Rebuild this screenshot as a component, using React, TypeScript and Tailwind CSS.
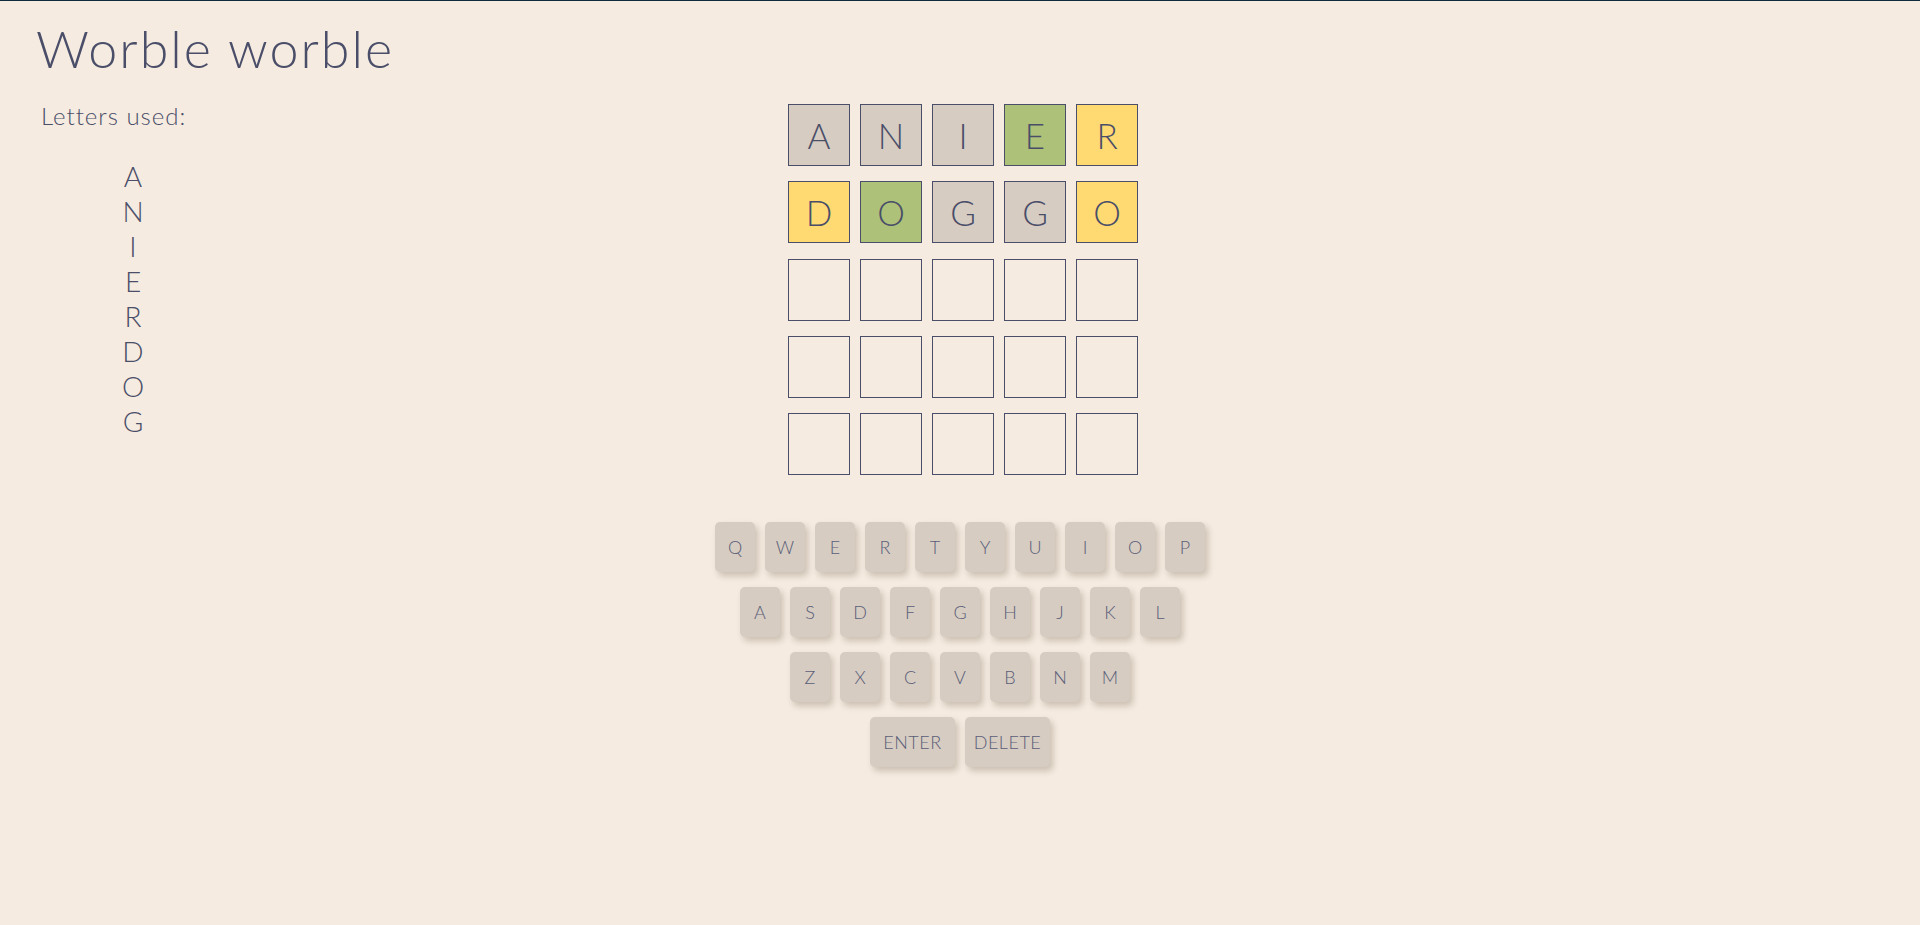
import React from "react";

const rows: { letter: string; state: "gray" | "green" | "yellow" | "empty" }[][] = [
  [
    { letter: "A", state: "gray" },
    { letter: "N", state: "gray" },
    { letter: "I", state: "gray" },
    { letter: "E", state: "green" },
    { letter: "R", state: "yellow" },
  ],
  [
    { letter: "D", state: "yellow" },
    { letter: "O", state: "green" },
    { letter: "G", state: "gray" },
    { letter: "G", state: "gray" },
    { letter: "O", state: "yellow" },
  ],
  ...Array.from({ length: 3 }, () =>
    Array.from({ length: 5 }, () => ({ letter: "", state: "empty" as const }))
  ),
];

const bgFor = {
  gray: "bg-[#d6ccc2]",
  green: "bg-[#adc178]",
  yellow: "bg-[#ffd972]",
  empty: "bg-transparent",
};

const keyRows = [
  ["Q", "W", "E", "R", "T", "Y", "U", "I", "O", "P"],
  ["A", "S", "D", "F", "G", "H", "J", "K", "L"],
  ["Z", "X", "C", "V", "B", "N", "M"],
];

const used = ["A", "N", "I", "E", "R", "D", "O", "G"];

export default function App() {
  return (
    <div
      className="min-h-screen bg-[#f5ebe0] border-t border-[#0f2a3a] text-[#4a4e69]"
      style={{ fontFamily: "Lato, 'Open Sans', sans-serif" }}
    >
      <h1 className="text-[52px] leading-none font-light pl-[36px] pt-[21px] tracking-[2px]">Worble worble</h1>
      <div className="grid grid-cols-[1fr_auto_1fr] mt-[30px]">
        <aside className="pl-[41px]">
          <p className="text-[24px] leading-none font-light tracking-[1px]">Letters used:</p>
          <div className="mt-[31px] w-[184px] text-center text-[28px] leading-[35px] font-light">
            {used.map((l) => (
              <div key={l}>{l}</div>
            ))}
          </div>
        </aside>
        <main className="flex flex-col items-center">
          <div className="ml-[6px] flex flex-col gap-y-[15.25px]">
            {rows.map((row, ri) => (
              <div key={ri} className="flex gap-[10px]">
                {row.map((t, ti) => (
                  <div
                    key={ti}
                    className={`w-[62px] h-[62px] border border-[#4a4e69] flex items-center justify-center text-[35px] font-light ${bgFor[t.state]}`}
                  >
                    {t.letter}
                  </div>
                ))}
              </div>
            ))}
          </div>
          <div className="mt-[47px] flex flex-col items-center gap-[15px]">
            {keyRows.map((r, i) => (
              <div key={i} className="flex gap-[10px]">
                {r.map((k) => (
                  <div
                    key={k}
                    className="w-[40px] h-[50px] rounded-[5px] bg-[#d6ccc2] flex items-center justify-center text-[18px] font-light text-[#5a5e78] shadow-[3px_4px_6px_rgba(60,40,20,0.22)]"
                  >
                    {k}
                  </div>
                ))}
              </div>
            ))}
            <div className="flex gap-[10px]">
              {["ENTER", "DELETE"].map((k) => (
                <div
                  key={k}
                  className="w-[85px] h-[50px] rounded-[5px] bg-[#d6ccc2] flex items-center justify-center text-[18px] font-light tracking-[0.5px] text-[#5a5e78] shadow-[3px_4px_6px_rgba(60,40,20,0.22)]"
                >
                  {k}
                </div>
              ))}
            </div>
          </div>
        </main>
        <div />
      </div>
    </div>
  );
}
